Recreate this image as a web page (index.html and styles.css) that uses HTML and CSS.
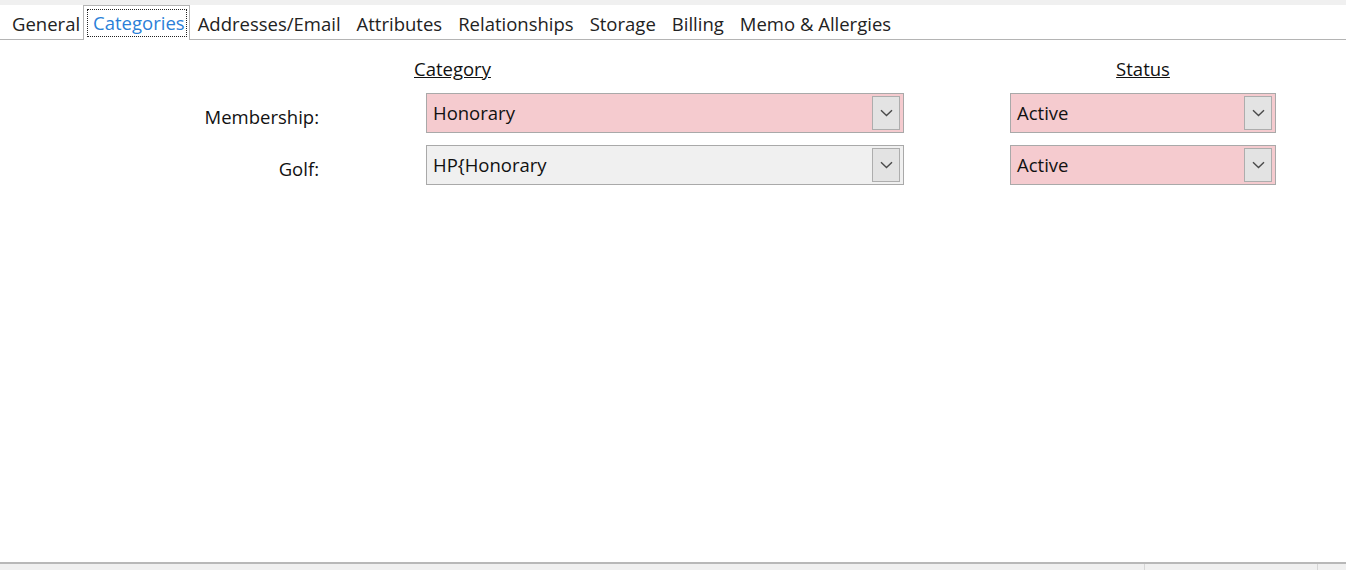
FILE: index.html
```html
<!DOCTYPE html>
<html>
<head>
<meta charset="utf-8">
<link rel="stylesheet" href="styles.css">
</head>
<body>
<div class="topstrip"></div>
<div class="tabs">
  <div class="tab">General</div>
  <div class="tab active"><span class="focus">Categories</span></div>
  <div class="tab">Addresses/Email</div>
  <div class="tab">Attributes</div>
  <div class="tab">Relationships</div>
  <div class="tab">Storage</div>
  <div class="tab">Billing</div>
  <div class="tab">Memo &amp; Allergies</div>
</div>
<main class="panel">
  <div class="form">
    <div class="head-spacer"></div>
    <div class="col-head cat">Category</div>
    <div class="col-head">Status</div>

    <div class="label">Membership:</div>
    <div class="combo pink"><span class="value">Honorary</span><span class="drop"><svg width="13" height="8" viewBox="0 0 13 8"><path d="M1 1.2 L6.5 6.5 L12 1.2" fill="none" stroke="#4a4a4a" stroke-width="1.4"/></svg></span></div>
    <div class="combo pink"><span class="value">Active</span><span class="drop"><svg width="13" height="8" viewBox="0 0 13 8"><path d="M1 1.2 L6.5 6.5 L12 1.2" fill="none" stroke="#4a4a4a" stroke-width="1.4"/></svg></span></div>

    <div class="label">Golf:</div>
    <div class="combo grey"><span class="value">HP{Honorary</span><span class="drop"><svg width="13" height="8" viewBox="0 0 13 8"><path d="M1 1.2 L6.5 6.5 L12 1.2" fill="none" stroke="#4a4a4a" stroke-width="1.4"/></svg></span></div>
    <div class="combo pink"><span class="value">Active</span><span class="drop"><svg width="13" height="8" viewBox="0 0 13 8"><path d="M1 1.2 L6.5 6.5 L12 1.2" fill="none" stroke="#4a4a4a" stroke-width="1.4"/></svg></span></div>
  </div>
</main>
<div class="statusbar">
  <div class="sb-fill"></div>
  <div class="sb-cell"></div>
  <div class="sb-end"></div>
</div>
</body>
</html>
```
FILE: styles.css
```css
html, body {
  margin: 0;
  padding: 0;
  background: #ffffff;
  font-family: "Open Sans", "Noto Sans", "Liberation Sans", sans-serif;
  font-size: 18.5px;
  color: #1a1a1a;
  height: 570px;
  overflow: hidden;
}

.topstrip {
  height: 5px;
  background: #f0f0f0;
}

.tabs {
  display: flex;
  align-items: flex-end;
  height: 34px;
  padding-left: 4px;
  border-bottom: 1px solid #b4b4b4;
  background: #ffffff;
}

.tab {
  padding: 0 8px;
  height: 31px;
  line-height: 31px;
  color: #222;
  white-space: nowrap;
  box-sizing: border-box;
}

.tab.active {
  height: 35px;
  margin-bottom: -1px;
  margin-left: -5px;
  padding: 3px 2px 0 3px;
  border: 1px solid #b4b4b4;
  border-bottom: none;
  background: #ffffff;
  color: #2b7fd8;
}

.tab.active .focus {
  display: block;
  height: 28px;
  line-height: 28px;
  padding: 0 2px 0 6px;
  outline: 1px dotted #222;
  outline-offset: -1px;
}

.panel {
  height: 522px;
  background: #ffffff;
}

.form {
  display: grid;
  grid-template-columns: 320px 478px 266px;
  column-gap: 106px;
  grid-template-rows: 24px 40px 40px;
  row-gap: 12px;
  padding-top: 17px;
  align-items: start;
}

.col-head {
  text-align: center;
  text-decoration: underline;
  color: #111;
  line-height: 24px;
}

.col-head.cat {
  justify-self: start;
  margin-left: -12px;
}

.label {
  text-align: right;
  padding-top: 11px;
  padding-right: 1px;
  color: #111;
}

.combo {
  display: flex;
  align-items: center;
  height: 40px;
  box-sizing: border-box;
  border: 1px solid #a9a9a9;
  padding: 2px 3px 2px 6px;
}

.combo.pink {
  background: #f5cbcf;
}

.combo.grey {
  background: #f0f0f0;
}

.combo .value {
  flex: 1;
  color: #111;
  padding-bottom: 2px;
}

.combo .drop {
  display: flex;
  align-items: center;
  justify-content: center;
  width: 28px;
  height: 34px;
  box-sizing: border-box;
  border: 1px solid #adadad;
  background: #e3e3e3;
}

.statusbar {
  display: flex;
  height: 7px;
  border-top: 2px solid #b8b8b8;
  background: #f0f0f0;
}

.sb-fill {
  flex: 1;
}

.sb-cell {
  width: 172px;
  border-left: 1px solid #d6d6d6;
}

.sb-end {
  width: 28px;
  border-left: 1px solid #d6d6d6;
}
```
